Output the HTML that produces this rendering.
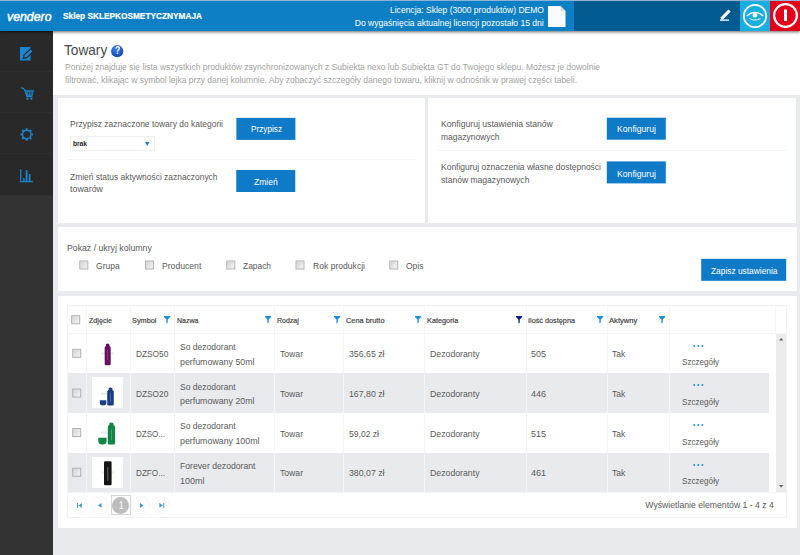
<!DOCTYPE html>
<html lang="pl">
<head>
<meta charset="utf-8">
<title>Towary</title>
<style>
*{box-sizing:border-box;margin:0;padding:0}
html,body{width:800px;height:555px;overflow:hidden;background:#e9eaee;font-family:"Liberation Sans",sans-serif}
body{position:relative}
.a,.t,svg{position:absolute}
.t{white-space:nowrap;transform-origin:0 50%;z-index:6}
#hdr{left:0;top:0;width:800px;height:31px;background:#0d7fc5;box-shadow:0 1px 3px rgba(0,0,0,.6);z-index:5}
#side{left:0;top:31px;width:53px;height:524px;background:#333}
.it{left:0;width:53px;height:41px;background:#292929;border-bottom:1px solid #2e2e2e}
#top{left:53px;top:31px;width:747px;height:64px;background:#fff}
.p{background:#fff}
.btn{background:#0f7ac8;height:22px}
.hr{height:1px;background:#f4f4f4}
.cb{width:8.8px;height:8.8px;border:1px solid #b0b0b0;background:linear-gradient(135deg,#d2d2d2,#f6f6f6);border-radius:.5px}
.v{width:1px;background:#f5f5f5}
.h{height:1px;background:#f5f5f5}
.alt{background:#e9eaee}
.pg{width:18px;height:18px;border-radius:50%;border:1px solid #f6f6f6}
svg{overflow:visible;z-index:6}
</style>
</head>
<body>
<div class="a" id="hdr">
  <div class="a" style="left:0;top:0;width:800px;height:1px;background:#8fb3d6"></div>
  <div class="a" style="left:574px;top:1px;width:166px;height:30px;background:#015a90"></div>
  <div class="a" style="left:740px;top:1px;width:30px;height:30px;background:#19aee0"></div>
  <div class="a" style="left:770px;top:1px;width:30px;height:30px;background:#e2001a"></div>
</div>
<!-- header icons -->
<svg style="left:547.5px;top:5.5px" width="18" height="21" viewBox="0 0 18 21"><path d="M0.5 0h12l5 5v15.5a.5.5 0 0 1-.5.5h-16.500a.5.5 0 0 1-.5-.5v-20a.5.5 0 0 1 .5-.5z" fill="#fafafa"/><path d="M12.500 0l5 5h-4.200a.8.8 0 0 1-.8-.8z" fill="#dcdcdc"/></svg>
<svg style="left:719px;top:8px" width="13" height="13" viewBox="0 0 13 13"><path d="M1.800 9.300l7.600-7.900 2.300 2.200-7.600 7.900h-2.300z" fill="#fff"/><rect x="1" y="11.500" width="9" height="1.300" fill="#fff"/></svg>
<svg style="left:743px;top:3.600px" width="24" height="24" viewBox="0 0 24 24"><circle cx="12" cy="12" r="11.200" fill="none" stroke="#fff" stroke-width="1.700"/><path d="M3.800 12c2.600-2.700 5.200-3.600 8.200-3.600s5.600.9 8.200 3.600" fill="none" stroke="#fff" stroke-width="1.500"/><circle cx="12" cy="11.200" r="2.300" fill="#fff"/><path d="M6.500 14.500c3.600 2 7.400 2 11 0" fill="none" stroke="#fff" stroke-width="1"/></svg>
<svg style="left:773px;top:3px" width="25" height="25" viewBox="0 0 25 25"><circle cx="12.500" cy="12.500" r="11.400" fill="none" stroke="#fff" stroke-width="2.200"/><rect x="11" y="6.500" width="3" height="11.500" fill="#fff"/></svg>

<div class="a" id="side">
  <div class="a it" style="top:0"></div>
  <div class="a it" style="top:41px"></div>
  <div class="a it" style="top:82px"></div>
  <div class="a it" style="top:123px;height:42px"></div>
</div>
<!-- sidebar icons -->
<svg style="left:20px;top:46.550px" width="14" height="14" viewBox="0 0 14 14"><rect x="0" y="0" width="10.500" height="13.500" fill="#1a85d1"/><path d="M3.300 11.400l.9-3.500 6.500-6.300 2.700 2.700-6.500 6.300z" fill="#1a85d1" stroke="#262626" stroke-width="1.200" stroke-linejoin="round"/></svg>
<svg style="left:21px;top:86.800px" width="13" height="13" viewBox="0 0 13 13"><path d="M0.100 0.700l2.200.7 1.700 2 1.800 6.200h5.600" fill="none" stroke="#1a85d1" stroke-width="1.200" stroke-linejoin="round"/><path d="M4.400 3.900h7.900l-1.200 4.400h-5.400z" fill="none" stroke="#1a85d1" stroke-width="1.100"/><path d="M6.700 4v4.200M8.400 4v4.200M10.100 4v4.200" stroke="#1a85d1" stroke-width=".9"/><circle cx="6.500" cy="11.800" r="1.150" fill="#1a85d1"/><circle cx="10.400" cy="11.800" r="1.150" fill="#1a85d1"/></svg>
<svg style="left:20px;top:128px" width="14" height="14" viewBox="0 0 14 14"><circle cx="6.700" cy="6.500" r="4.200" fill="none" stroke="#1a85d1" stroke-width="1.400"/><g stroke="#1a85d1" stroke-width="2"><path d="M6.700 0.200v1.700M6.700 11.100v1.700M0.400 6.500h1.700M11.300 6.500h1.700M2.200 2l1.200 1.200M10 9.800l1.200 1.200M2.200 11l1.200-1.200M10 3.200l1.200-1.200"/></g></svg>
<svg style="left:20px;top:168.800px" width="14" height="14" viewBox="0 0 14 14"><path d="M0.700 0v12.600h12.200" fill="none" stroke="#1a85d1" stroke-width="1.200"/><rect x="3.200" y="9" width="1.400" height="3.200" fill="#1a85d1"/><rect x="5.700" y="1.200" width="1.800" height="11" fill="#1a85d1"/><rect x="8.800" y="5" width="1.700" height="7.200" fill="#1a85d1"/></svg>

<div class="a" id="top"></div>
<svg style="left:111px;top:44.500px" width="12.400" height="12.400" viewBox="0 0 12.400 12.400"><defs><radialGradient id="hg" cx=".4" cy=".3" r=".8"><stop offset="0" stop-color="#3f7fe8"/><stop offset="1" stop-color="#0f3fae"/></radialGradient></defs><circle cx="6.200" cy="6.200" r="6.100" fill="url(#hg)"/></svg>

<div class="a p" style="left:57.500px;top:97.500px;width:367px;height:125px"></div>
<div class="a p" style="left:427.600px;top:97.500px;width:368.800px;height:125px"></div>
<div class="a p" style="left:57.500px;top:227px;width:739px;height:64px"></div>
<div class="a p" style="left:57.500px;top:295.500px;width:739px;height:232px"></div>

<!-- panel 1 -->
<div class="a" style="left:70px;top:136px;width:84.500px;height:14.500px;border:1px solid #f0f0f0;background:#fff"></div>
<svg style="left:145.200px;top:141.600px" width="4.400" height="4" viewBox="0 0 4.400 4"><path d="M0 0h4.400l-2.200 4z" fill="#1b7fc8"/></svg>
<div class="a hr" style="left:67px;top:159px;width:348.500px"></div>
<!-- panel 2 -->
<div class="a hr" style="left:437px;top:150px;width:350px"></div>
<!-- panel 3 -->

<div class="a btn" style="left:236px;top:117px;width:58.9px;height:21.9px;transform:translate(0.4px,0.9px)"></div>
<div class="a btn" style="left:236px;top:170px;width:59.25px;height:21.8px;transform:translate(0.25px,0px)"></div>
<div class="a btn" style="left:606px;top:117px;width:59.2px;height:22px;transform:translate(0.8px,0.7px)"></div>
<div class="a btn" style="left:606px;top:161px;width:59.2px;height:21.9px;transform:translate(0.8px,0.4px)"></div>
<div class="a btn" style="left:701px;top:258px;width:85px;height:22px;transform:translate(0.2px,0.8px)"></div>
<!-- table -->
<div class="a alt" style="left:68px;top:373px;width:701px;height:40px"></div>
<div class="a alt" style="left:68px;top:452.500px;width:701px;height:39.500px"></div>
<div class="a" style="left:776px;top:333px;width:10px;height:159px;background:#ebebeb"></div>
<div class="a" style="left:67px;top:305px;width:720px;height:213px;border:1px solid #f3f3f3"></div>
<div class="a h" style="left:68px;top:333px;width:718px"></div>
<div class="a h" style="left:68px;top:492px;width:718px"></div>
<div class="a v" style="left:86px;top:306px;width:1px;height:186px"></div>
<div class="a v" style="left:130px;top:306px;width:1px;height:186px"></div>
<div class="a v" style="left:173.5px;top:306px;width:1px;height:186px"></div>
<div class="a v" style="left:274px;top:306px;width:1px;height:186px"></div>
<div class="a v" style="left:343px;top:306px;width:1px;height:186px"></div>
<div class="a v" style="left:424.3px;top:306px;width:1px;height:186px"></div>
<div class="a v" style="left:525.8px;top:306px;width:1px;height:186px"></div>
<div class="a v" style="left:607.2px;top:306px;width:1px;height:186px"></div>
<div class="a v" style="left:669.3px;top:306px;width:1px;height:186px"></div>
<div class="a v" style="left:775px;top:306px;width:1px;height:27px"></div>

<div class="a cb" style="left:79px;top:260px;transform:translate(0.3px,0.6px)"></div>
<div class="a cb" style="left:145px;top:260px;transform:translate(0.0px,0.6px)"></div>
<div class="a cb" style="left:226px;top:260px;transform:translate(0.3px,0.6px)"></div>
<div class="a cb" style="left:295px;top:260px;transform:translate(0.5px,0.6px)"></div>
<div class="a cb" style="left:389px;top:260px;transform:translate(0.3px,0.6px)"></div>
<div class="a cb" style="left:71px;top:315px;transform:translate(0.2px,0.3px)"></div>
<div class="a cb" style="left:72px;top:348px;transform:translate(0.2px,0.8px)"></div>
<div class="a cb" style="left:72px;top:388px;transform:translate(0.2px,0.5px)"></div>
<div class="a cb" style="left:72px;top:428px;transform:translate(0.2px,0.1px)"></div>
<div class="a cb" style="left:72px;top:467px;transform:translate(0.2px,0.8px)"></div>
<svg style="left:163.7px;top:316.1px" width="6.2" height="7.4" viewBox="0 0 6.2 7.4"><path d="M0 0h6.200v.9l-2.400 2.500v3.100l-1.400.9v-4l-2.400-2.500z" fill="#1f8fd8"/></svg>
<svg style="left:264.8px;top:316.1px" width="6.2" height="7.4" viewBox="0 0 6.2 7.4"><path d="M0 0h6.200v.9l-2.400 2.500v3.100l-1.400.9v-4l-2.400-2.500z" fill="#1f8fd8"/></svg>
<svg style="left:333.6px;top:316.1px" width="6.2" height="7.4" viewBox="0 0 6.2 7.4"><path d="M0 0h6.200v.9l-2.400 2.500v3.100l-1.400.9v-4l-2.400-2.500z" fill="#1f8fd8"/></svg>
<svg style="left:415px;top:316.1px" width="6.2" height="7.4" viewBox="0 0 6.2 7.4"><path d="M0 0h6.200v.9l-2.400 2.500v3.100l-1.400.9v-4l-2.400-2.500z" fill="#1f8fd8"/></svg>
<svg style="left:515.6px;top:316.1px" width="6.2" height="7.4" viewBox="0 0 6.2 7.4"><path d="M0 0h6.200v.9l-2.400 2.500v3.100l-1.400.9v-4l-2.400-2.500z" fill="#0a1f8f"/></svg>
<svg style="left:596.8px;top:316.1px" width="6.2" height="7.4" viewBox="0 0 6.2 7.4"><path d="M0 0h6.200v.9l-2.400 2.500v3.100l-1.400.9v-4l-2.400-2.500z" fill="#1f8fd8"/></svg>
<svg style="left:659.3px;top:316.1px" width="6.2" height="7.4" viewBox="0 0 6.2 7.4"><path d="M0 0h6.200v.9l-2.400 2.500v3.100l-1.400.9v-4l-2.400-2.500z" fill="#1f8fd8"/></svg>

<svg style="left:692.7px;top:344.6px" width="11" height="2" viewBox="0 0 11 2"><circle cx="1.200" cy="1" r="1" fill="#1f8fd8"/><circle cx="5.300" cy="1" r="1" fill="#1f8fd8"/><circle cx="9.400" cy="1" r="1" fill="#1f8fd8"/></svg>
<svg style="left:692.7px;top:384.3px" width="11" height="2" viewBox="0 0 11 2"><circle cx="1.200" cy="1" r="1" fill="#1f8fd8"/><circle cx="5.300" cy="1" r="1" fill="#1f8fd8"/><circle cx="9.400" cy="1" r="1" fill="#1f8fd8"/></svg>
<svg style="left:692.7px;top:423.9px" width="11" height="2" viewBox="0 0 11 2"><circle cx="1.200" cy="1" r="1" fill="#1f8fd8"/><circle cx="5.300" cy="1" r="1" fill="#1f8fd8"/><circle cx="9.400" cy="1" r="1" fill="#1f8fd8"/></svg>
<svg style="left:692.7px;top:463.6px" width="11" height="2" viewBox="0 0 11 2"><circle cx="1.200" cy="1" r="1" fill="#1f8fd8"/><circle cx="5.300" cy="1" r="1" fill="#1f8fd8"/><circle cx="9.400" cy="1" r="1" fill="#1f8fd8"/></svg>

<!-- scrollbar arrows -->
<svg style="left:778.800px;top:337.900px" width="4.400" height="2.600" viewBox="0 0 5 3"><path d="M0 3l2.500-3 2.500 3z" fill="#606060"/></svg>
<svg style="left:778.800px;top:484.700px" width="4.400" height="2.600" viewBox="0 0 5 3"><path d="M0 0h5l-2.500 3z" fill="#606060"/></svg>
<!-- product images -->
<div class="a" style="left:92px;top:377px;width:31px;height:31px;background:#fff"></div>
<div class="a" style="left:92px;top:456.800px;width:31px;height:31px;background:#fff"></div>
<svg style="left:92px;top:338px" width="31" height="31" viewBox="0 0 31 31"><path d="M3 2l25 27M28 2l-25 27" stroke="#f8f8f8" stroke-width=".7"/><rect x="9" y="14.500" width="13" height="2" fill="#e9e9e9"/><path d="M14 6.300q1.700-1.500 3.400 0v1.500l1.300 1.500v16.800q0 1.200-1.200 1.200h-3.600q-1.200 0-1.200-1.200v-16.800l1.300-1.500z" fill="#651060"/><rect x="15.300" y="12" width=".9" height="10" fill="#8a4a86"/></svg>
<svg style="left:92px;top:377.500px" width="31" height="31" viewBox="0 0 31 31"><rect x="9" y="14.500" width="6" height="2" fill="#e9e9e9"/><path d="M16.700 10.300q1.800-1.500 3.600 0v1.500l1.500 1.500v13q0 1.200-1.200 1.200h-4.200q-1.200 0-1.200-1.200v-13l1.500-1.500z" fill="#1b3c86"/><path d="M7.800 22.300h6.500v2.700q0 2.500-3.250 2.500t-3.250-2.500z" fill="#1b3c86"/><rect x="18.100" y="15.500" width=".9" height="8.500" fill="#4f69a5"/></svg>
<svg style="left:92px;top:417px" width="31" height="31" viewBox="0 0 31 31"><path d="M3 2l25 27M28 2l-25 27" stroke="#f8f8f8" stroke-width=".7"/><rect x="9" y="14.500" width="6" height="2" fill="#e9e9e9"/><path d="M17.400 6.200q2-1.400 4 0v1.600l1.600 1.600v16.900q0 1.200-1.200 1.200h-4.800q-1.200 0-1.200-1.200v-16.900l1.600-1.600z" fill="#0f8645"/><path d="M6.300 20.700h8.300v3.300q0 3.500-4.150 3.500t-4.150-3.500z" fill="#0f8645"/><rect x="19" y="12.500" width=".9" height="10.500" fill="#4fa878"/></svg>
<svg style="left:92px;top:456.800px" width="31" height="31" viewBox="0 0 31 31"><rect x="9" y="14.500" width="13" height="2" fill="#ebebeb"/><rect x="12" y="4.200" width="7.600" height="24" rx="1.200" fill="#151515"/><rect x="15.400" y="10" width=".9" height="14" fill="#6a6a6a"/></svg>
<!-- pager -->
<div class="a pg" style="left:70.200px;top:496px"></div>
<div class="a pg" style="left:91px;top:496px"></div>
<div class="a pg" style="left:132px;top:496px"></div>
<div class="a pg" style="left:152.200px;top:496px"></div>
<div class="a" style="left:110.500px;top:495.200px;width:20px;height:19.500px;border:1px solid #d6d6d6"></div>
<div class="a" style="left:112px;top:496.500px;width:17px;height:17px;border-radius:50%;background:#bdbdbd"></div>
<svg style="left:76.800px;top:502.800px" width="5.200" height="4.800" viewBox="0 0 6 5.500"><rect x="0" y="0" width="1.100" height="5.500" fill="#3a97da"/><path d="M5.600 0v5.500l-4-2.750z" fill="#3a97da"/></svg>
<svg style="left:98.300px;top:502.800px" width="3.500" height="4.800" viewBox="0 0 4 5.500"><path d="M4 0v5.500l-4-2.750z" fill="#3a97da"/></svg>
<svg style="left:139.500px;top:502.800px" width="3.500" height="4.800" viewBox="0 0 4 5.500"><path d="M0 0v5.500l4-2.750z" fill="#3a97da"/></svg>
<svg style="left:158.600px;top:502.800px" width="5.200" height="4.800" viewBox="0 0 6 5.500"><rect x="4.900" y="0" width="1.100" height="5.500" fill="#3a97da"/><path d="M0.400 0v5.500l4-2.750z" fill="#3a97da"/></svg>
<span class="t" style="top:10.01px;font-size:9.7px;line-height:12.61px;color:#fff;font-weight:bold;left:62.7px;transform:scaleX(0.8551);-webkit-text-stroke:0.2px #fff;">Sklep SKLEPKOSMETYCZNYMAJA</span>
<span class="t" style="top:4.04px;font-size:9.8px;line-height:12.74px;color:#fff;right:256.2px;transform-origin:100% 50%;transform:scaleX(0.8701);">Licencja: Sklep (3000 produktów) DEMO</span>
<span class="t" style="top:16.74px;font-size:9.8px;line-height:12.74px;color:#fff;right:256.2px;transform-origin:100% 50%;transform:scaleX(0.872);">Do wygaśnięcia aktualnej licencji pozostało 15 dni</span>
<span class="t" style="top:7.89px;font-size:13.2px;line-height:17.16px;color:#fff;left:7px;transform:scaleX(0.9335);font-style:italic;-webkit-text-stroke:0.45px #fff;">vendero</span>
<span class="t" style="top:40.15px;font-size:15px;line-height:19.5px;color:#4a4a4a;left:64.4px;transform:scaleX(0.9092);">Towary</span>
<span class="t" style="top:61.48px;font-size:9.6px;line-height:12.48px;color:#a3a3a3;left:64.5px;transform:scaleX(0.8852);">Poniżej znajduje się lista wszystkich produktów zsynchronizowanych z Subiekta nexo lub Subiekta GT do Twojego sklepu. Możesz je dowolnie</span>
<span class="t" style="top:74.28px;font-size:9.6px;line-height:12.48px;color:#a3a3a3;left:64.5px;transform:scaleX(0.8866);">filtrować, klikając w symbol lejka przy danej kolumnie. Aby zobaczyć szczegóły danego towaru, kliknij w odnośnik w prawej części tabeli.</span>
<span class="t" style="top:117.75px;font-size:9.5px;line-height:12.35px;color:#5a5a5a;left:70px;transform:scaleX(0.8916);">Przypisz zaznaczone towary do kategorii</span>
<span class="t" style="top:139.26px;font-size:7.6px;line-height:9.88px;color:#222;font-weight:bold;left:73px;transform:scaleX(0.8724);">brak</span>
<span class="t" style="top:170.75px;font-size:9.5px;line-height:12.35px;color:#5a5a5a;left:70px;transform:scaleX(0.8868);">Zmień status aktywności zaznaczonych</span>
<span class="t" style="top:182.94px;font-size:9.5px;line-height:12.35px;color:#5a5a5a;left:70px;transform:scaleX(0.9329);">towarów</span>
<span class="t" style="top:123.28px;font-size:9.6px;line-height:12.48px;color:#fff;left:250.8px;transform:scaleX(0.8552);">Przypisz</span>
<span class="t" style="top:175.68px;font-size:9.6px;line-height:12.48px;color:#fff;left:253.8px;transform:scaleX(0.8891);">Zmień</span>
<span class="t" style="top:117.95px;font-size:9.5px;line-height:12.35px;color:#5a5a5a;left:440.6px;transform:scaleX(0.9086);">Konfiguruj ustawienia stanów</span>
<span class="t" style="top:130.54px;font-size:9.5px;line-height:12.35px;color:#5a5a5a;left:440.6px;transform:scaleX(0.8918);">magazynowych</span>
<span class="t" style="top:161.25px;font-size:9.5px;line-height:12.35px;color:#5a5a5a;left:440.6px;transform:scaleX(0.8937);">Konfiguruj oznaczenia własne dostępności</span>
<span class="t" style="top:174.15px;font-size:9.5px;line-height:12.35px;color:#5a5a5a;left:440.6px;transform:scaleX(0.9);">stanów magazynowych</span>
<span class="t" style="top:123.28px;font-size:9.6px;line-height:12.48px;color:#fff;left:617px;transform:scaleX(0.9027);">Konfiguruj</span>
<span class="t" style="top:167.58px;font-size:9.6px;line-height:12.48px;color:#fff;left:617px;transform:scaleX(0.9027);">Konfiguruj</span>
<span class="t" style="top:242.04px;font-size:9.5px;line-height:12.35px;color:#5a5a5a;left:67px;transform:scaleX(0.9177);">Pokaż / ukryj kolumny</span>
<span class="t" style="top:260.14px;font-size:9.5px;line-height:12.35px;color:#5a5a5a;left:96.3px;transform:scaleX(0.8975);">Grupa</span>
<span class="t" style="top:260.14px;font-size:9.5px;line-height:12.35px;color:#5a5a5a;left:162px;transform:scaleX(0.9074);">Producent</span>
<span class="t" style="top:260.14px;font-size:9.5px;line-height:12.35px;color:#5a5a5a;left:242.5px;transform:scaleX(0.8836);">Zapach</span>
<span class="t" style="top:260.14px;font-size:9.5px;line-height:12.35px;color:#5a5a5a;left:312.5px;transform:scaleX(0.9034);">Rok produkcji</span>
<span class="t" style="top:260.14px;font-size:9.5px;line-height:12.35px;color:#5a5a5a;left:406.3px;transform:scaleX(0.8953);">Opis</span>
<span class="t" style="top:264.58px;font-size:9.6px;line-height:12.48px;color:#fff;left:710.5px;transform:scaleX(0.872);">Zapisz ustawienia</span>
<span class="t" style="top:315.58px;font-size:8px;line-height:10.4px;color:#444;left:88.6px;transform:scaleX(0.8916);-webkit-text-stroke:0.2px #444;">Zdjęcie</span>
<span class="t" style="top:315.58px;font-size:8px;line-height:10.4px;color:#444;left:132.3px;transform:scaleX(0.918);-webkit-text-stroke:0.2px #444;">Symbol</span>
<span class="t" style="top:315.58px;font-size:8px;line-height:10.4px;color:#444;left:176.60000000000002px;transform:scaleX(0.8711);-webkit-text-stroke:0.2px #444;">Nazwa</span>
<span class="t" style="top:315.58px;font-size:8px;line-height:10.4px;color:#444;left:276.8px;transform:scaleX(0.8753);-webkit-text-stroke:0.2px #444;">Rodzaj</span>
<span class="t" style="top:315.58px;font-size:8px;line-height:10.4px;color:#444;left:345.6px;transform:scaleX(0.9208);-webkit-text-stroke:0.2px #444;">Cena brutto</span>
<span class="t" style="top:315.58px;font-size:8px;line-height:10.4px;color:#444;left:426.8px;transform:scaleX(0.9139);-webkit-text-stroke:0.2px #444;">Kategoria</span>
<span class="t" style="top:315.58px;font-size:8px;line-height:10.4px;color:#444;left:527.8px;transform:scaleX(0.911);-webkit-text-stroke:0.2px #444;">Ilość dostępna</span>
<span class="t" style="top:315.58px;font-size:8px;line-height:10.4px;color:#444;left:609.4px;transform:scaleX(0.9531);-webkit-text-stroke:0.2px #444;">Aktywny</span>
<span class="t" style="top:348.25px;font-size:9.5px;line-height:12.35px;color:#5a5a5a;left:135.8px;transform:scaleX(0.8737);">DZSO50</span>
<span class="t" style="top:341.14px;font-size:9.5px;line-height:12.35px;color:#5a5a5a;left:179.5px;transform:scaleX(0.8981);">So dezodorant</span>
<span class="t" style="top:355.54px;font-size:9.5px;line-height:12.35px;color:#5a5a5a;left:179.5px;transform:scaleX(0.9282);">perfumowany 50ml</span>
<span class="t" style="top:348.25px;font-size:9.5px;line-height:12.35px;color:#5a5a5a;left:280px;transform:scaleX(0.9075);">Towar</span>
<span class="t" style="top:348.25px;font-size:9.5px;line-height:12.35px;color:#5a5a5a;left:348.8px;transform:scaleX(0.9206);">356,65 zł</span>
<span class="t" style="top:348.25px;font-size:9.5px;line-height:12.35px;color:#5a5a5a;left:430px;transform:scaleX(0.9188);">Dezodoranty</span>
<span class="t" style="top:348.25px;font-size:9.5px;line-height:12.35px;color:#5a5a5a;left:531.3px;transform:scaleX(0.9458);">505</span>
<span class="t" style="top:348.25px;font-size:9.5px;line-height:12.35px;color:#5a5a5a;left:612.2px;transform:scaleX(0.8988);">Tak</span>
<span class="t" style="top:356.44px;font-size:9.5px;line-height:12.35px;color:#5a5a5a;left:681.8px;transform:scaleX(0.8543);">Szczegóły</span>
<span class="t" style="top:387.94px;font-size:9.5px;line-height:12.35px;color:#5a5a5a;left:135.8px;transform:scaleX(0.8737);">DZSO20</span>
<span class="t" style="top:380.84px;font-size:9.5px;line-height:12.35px;color:#5a5a5a;left:179.5px;transform:scaleX(0.8981);">So dezodorant</span>
<span class="t" style="top:395.24px;font-size:9.5px;line-height:12.35px;color:#5a5a5a;left:179.5px;transform:scaleX(0.9282);">perfumowany 20ml</span>
<span class="t" style="top:387.94px;font-size:9.5px;line-height:12.35px;color:#5a5a5a;left:280px;transform:scaleX(0.9075);">Towar</span>
<span class="t" style="top:387.94px;font-size:9.5px;line-height:12.35px;color:#5a5a5a;left:348.8px;transform:scaleX(0.9206);">167,80 zł</span>
<span class="t" style="top:387.94px;font-size:9.5px;line-height:12.35px;color:#5a5a5a;left:430px;transform:scaleX(0.9188);">Dezodoranty</span>
<span class="t" style="top:387.94px;font-size:9.5px;line-height:12.35px;color:#5a5a5a;left:531.3px;transform:scaleX(0.9458);">446</span>
<span class="t" style="top:387.94px;font-size:9.5px;line-height:12.35px;color:#5a5a5a;left:612.2px;transform:scaleX(0.8988);">Tak</span>
<span class="t" style="top:396.14px;font-size:9.5px;line-height:12.35px;color:#5a5a5a;left:681.8px;transform:scaleX(0.8543);">Szczegóły</span>
<span class="t" style="top:427.55px;font-size:9.5px;line-height:12.35px;color:#5a5a5a;left:135.8px;transform:scaleX(0.8452);">DZSO...</span>
<span class="t" style="top:420.44px;font-size:9.5px;line-height:12.35px;color:#5a5a5a;left:179.5px;transform:scaleX(0.8981);">So dezodorant</span>
<span class="t" style="top:434.84px;font-size:9.5px;line-height:12.35px;color:#5a5a5a;left:179.5px;transform:scaleX(0.9293);">perfumowany 100ml</span>
<span class="t" style="top:427.55px;font-size:9.5px;line-height:12.35px;color:#5a5a5a;left:280px;transform:scaleX(0.9075);">Towar</span>
<span class="t" style="top:427.55px;font-size:9.5px;line-height:12.35px;color:#5a5a5a;left:348.8px;transform:scaleX(0.9014);">59,02 zł</span>
<span class="t" style="top:427.55px;font-size:9.5px;line-height:12.35px;color:#5a5a5a;left:430px;transform:scaleX(0.9188);">Dezodoranty</span>
<span class="t" style="top:427.55px;font-size:9.5px;line-height:12.35px;color:#5a5a5a;left:531.3px;transform:scaleX(0.9458);">515</span>
<span class="t" style="top:427.55px;font-size:9.5px;line-height:12.35px;color:#5a5a5a;left:612.2px;transform:scaleX(0.8988);">Tak</span>
<span class="t" style="top:435.75px;font-size:9.5px;line-height:12.35px;color:#5a5a5a;left:681.8px;transform:scaleX(0.8543);">Szczegóły</span>
<span class="t" style="top:467.25px;font-size:9.5px;line-height:12.35px;color:#5a5a5a;left:135.8px;transform:scaleX(0.8585);">DZFO...</span>
<span class="t" style="top:460.14px;font-size:9.5px;line-height:12.35px;color:#5a5a5a;left:179.5px;transform:scaleX(0.9105);">Forever dezodorant</span>
<span class="t" style="top:474.54px;font-size:9.5px;line-height:12.35px;color:#5a5a5a;left:179.5px;transform:scaleX(0.9469);">100ml</span>
<span class="t" style="top:467.25px;font-size:9.5px;line-height:12.35px;color:#5a5a5a;left:280px;transform:scaleX(0.9075);">Towar</span>
<span class="t" style="top:467.25px;font-size:9.5px;line-height:12.35px;color:#5a5a5a;left:348.8px;transform:scaleX(0.9206);">380,07 zł</span>
<span class="t" style="top:467.25px;font-size:9.5px;line-height:12.35px;color:#5a5a5a;left:430px;transform:scaleX(0.9188);">Dezodoranty</span>
<span class="t" style="top:467.25px;font-size:9.5px;line-height:12.35px;color:#5a5a5a;left:531.3px;transform:scaleX(0.9458);">461</span>
<span class="t" style="top:467.25px;font-size:9.5px;line-height:12.35px;color:#5a5a5a;left:612.2px;transform:scaleX(0.8988);">Tak</span>
<span class="t" style="top:475.44px;font-size:9.5px;line-height:12.35px;color:#5a5a5a;left:681.8px;transform:scaleX(0.8543);">Szczegóły</span>
<span class="t" style="top:499.14px;font-size:9.5px;line-height:12.35px;color:#5a5a5a;right:25.7px;transform-origin:100% 50%;transform:scaleX(0.9128);">Wyświetlanie elementów 1 - 4 z 4</span>
<span class="t" style="top:499.2px;font-size:10px;line-height:13.0px;color:#fff;left:118.5px;transform:scaleX(0.809);">1</span>
<span class="t" style="top:43.65px;font-size:10.5px;line-height:13.65px;color:#fff;font-weight:bold;left:114.7px;transform:scaleX(0.8097);">?</span>
</body>
</html>
